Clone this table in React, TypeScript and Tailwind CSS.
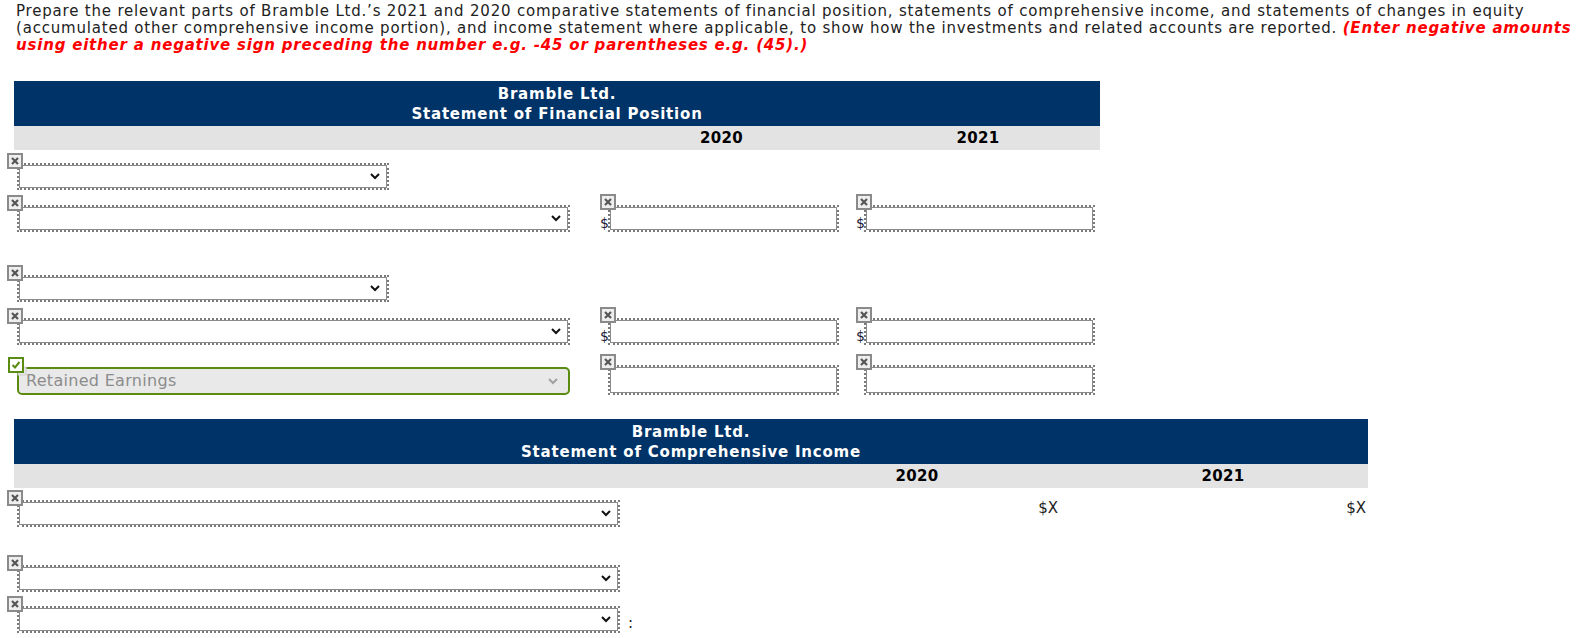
import React from "react";

function XIcon() {
  return (
    <svg width="16" height="16" viewBox="0 0 16 16">
      <rect x="1" y="1" width="14" height="14" fill="#eeeeee" stroke="#8a8a8a" strokeWidth="2" />
      <path d="M5 5 L11 11 M11 5 L5 11" stroke="#555555" strokeWidth="2.2" />
    </svg>
  );
}

function CheckIcon() {
  return (
    <svg width="20" height="20" viewBox="0 0 20 20">
      <rect x="10" y="10" width="8" height="8" fill="#e6e6e6" stroke="#cfcfcf" strokeWidth="1" />
      <rect x="1" y="1" width="14" height="14" fill="#ffffff" stroke="#5b8c12" strokeWidth="2" />
      <path d="M4.5 8 L7 10.5 L11.5 5" stroke="#5b8c12" strokeWidth="2" fill="none" />
    </svg>
  );
}

function Chevron({ color = "#111111" }: { color?: string }) {
  return (
    <svg width="10" height="7" viewBox="0 0 10 7">
      <polyline points="1,1 5,5 9,1" stroke={color} strokeWidth="2" fill="none" />
    </svg>
  );
}

function SelectField({ width, after }: { width: string; after?: React.ReactNode }) {
  return (
    <div className="relative flex items-end pt-[10px] pl-[3px]">
      <span className="absolute left-[-7px] top-0 flex">
        <XIcon />
      </span>
      <div className={`${width} border-2 border-dotted border-[#7b7b7b]`}>
        <div className="flex h-[23px] items-center justify-end border border-[#8a8a8a] bg-white pr-[6px]">
          <Chevron />
        </div>
      </div>
      {after}
    </div>
  );
}

function RetainedSelect() {
  return (
    <div className="relative pt-[10px] pl-[3px]">
      <span className="absolute left-[-6px] top-0 flex">
        <CheckIcon />
      </span>
      <div className="flex h-[28px] w-[553px] items-center justify-between rounded-[5px] border-2 border-[#5b8c12] bg-[#e9e9e9] pl-[7px] pr-[10px]">
        <span className="text-[16px] tracking-[0.3px] text-[#8c8c8c]">Retained Earnings</span>
        <Chevron color="#a0a0a0" />
      </div>
    </div>
  );
}

function InputField({ dollar, tall }: { dollar?: boolean; tall?: boolean }) {
  return (
    <div className="relative flex items-end pt-[11px]">
      <span className="absolute left-0 top-0 flex">
        <XIcon />
      </span>
      <span className="relative z-10 w-[8px] pb-[2px] text-[14px] leading-none text-[#1c1c3a]">{dollar ? "$" : ""}</span>
      <div className="w-[231px] border-2 border-dotted border-[#7b7b7b]">
        <div className={`${tall ? "h-[26px]" : "h-[23px]"} border border-[#8a8a8a] bg-white`} />
      </div>
    </div>
  );
}

function Header({ title }: { title: string }) {
  return (
    <div className="bg-[#003468] pt-[3px] pb-[2px] text-center text-[15px] font-bold leading-[20px] tracking-[0.8px] text-white">
      <div>Bramble Ltd.</div>
      <div>{title}</div>
    </div>
  );
}

export default function App() {
  return (
    <div className="min-h-[638px] bg-white font-['DejaVu_Sans',Verdana,sans-serif] text-[#222222]">
      <p className="pl-[16px] pt-[3px] text-[15px] leading-[17px] tracking-[0.8px]">
        Prepare the relevant parts of Bramble Ltd.’s 2021 and 2020 comparative statements of financial position,
        statements of comprehensive income, and statements of changes in equity (accumulated other comprehensive
        income portion), and income statement where applicable, to show how the investments and related accounts are
        reported.{" "}
        <span className="font-bold italic tracking-[0.8px] text-[#ff0000]">(Enter negative amounts</span>{" "}
        <span className="font-bold italic tracking-[0.8px] text-[#ff0000]">
          using either a negative sign preceding the number e.g. -45 or parentheses e.g. (45).)
        </span>
      </p>

      {/* statement of financial position */}
      <div className="ml-[14px] mt-[27px] w-[1086px]">
        <Header title="Statement of Financial Position" />
        <div className="grid h-[24px] grid-cols-[582px_256px_248px] items-center bg-[#e3e3e3] text-[15px] font-bold tracking-[0.3px] text-black">
          <div />
          <div className="w-[247px] pl-[4px] text-center">2020</div>
          <div className="w-[248px] pl-[4px] text-center">2021</div>
        </div>

        <div className="grid h-[40px] grid-cols-[582px_256px_248px] items-end">
          <SelectField width="w-[372px]" />
        </div>
        <div className="grid h-[42px] grid-cols-[582px_256px_248px] items-end">
          <SelectField width="w-[553px]" />
          <div className="pl-[4px]">
            <InputField dollar />
          </div>
          <div className="pl-[4px]">
            <InputField dollar />
          </div>
        </div>
        <div className="grid h-[70px] grid-cols-[582px_256px_248px] items-end">
          <SelectField width="w-[372px]" />
        </div>
        <div className="grid h-[43px] grid-cols-[582px_256px_248px] items-end">
          <SelectField width="w-[553px]" />
          <div className="pl-[4px]">
            <InputField dollar />
          </div>
          <div className="pl-[4px]">
            <InputField dollar />
          </div>
        </div>
        <div className="grid h-[50px] grid-cols-[582px_256px_248px] items-end">
          <RetainedSelect />
          <div className="pl-[4px]">
            <InputField tall />
          </div>
          <div className="pl-[4px]">
            <InputField tall />
          </div>
        </div>
      </div>

      {/* statement of comprehensive income */}
      <div className="ml-[14px] mt-[24px] w-[1354px]">
        <Header title="Statement of Comprehensive Income" />
        <div className="grid h-[24px] grid-cols-[758px_290px_306px] items-center bg-[#e3e3e3] text-[15px] font-bold tracking-[0.3px] text-black">
          <div />
          <div className="text-center">2020</div>
          <div className="pl-[16px] text-center">2021</div>
        </div>

        <div className="grid h-[39px] grid-cols-[758px_290px_306px] items-end">
          <SelectField width="w-[603px]" />
          <div className="pb-[10px] pr-[4px] text-right text-[15px] leading-[18px]">$X</div>
          <div className="pb-[10px] pr-[2px] text-right text-[15px] leading-[18px]">$X</div>
        </div>
        <div className="grid h-[65px] grid-cols-[758px_290px_306px] items-end">
          <SelectField width="w-[603px]" />
        </div>
        <div className="grid h-[41px] grid-cols-[758px_290px_306px] items-end">
          <SelectField
            width="w-[603px]"
            after={<span className="ml-[8px] pb-[2px] text-[15px] leading-none">:</span>}
          />
        </div>
      </div>
    </div>
  );
}
